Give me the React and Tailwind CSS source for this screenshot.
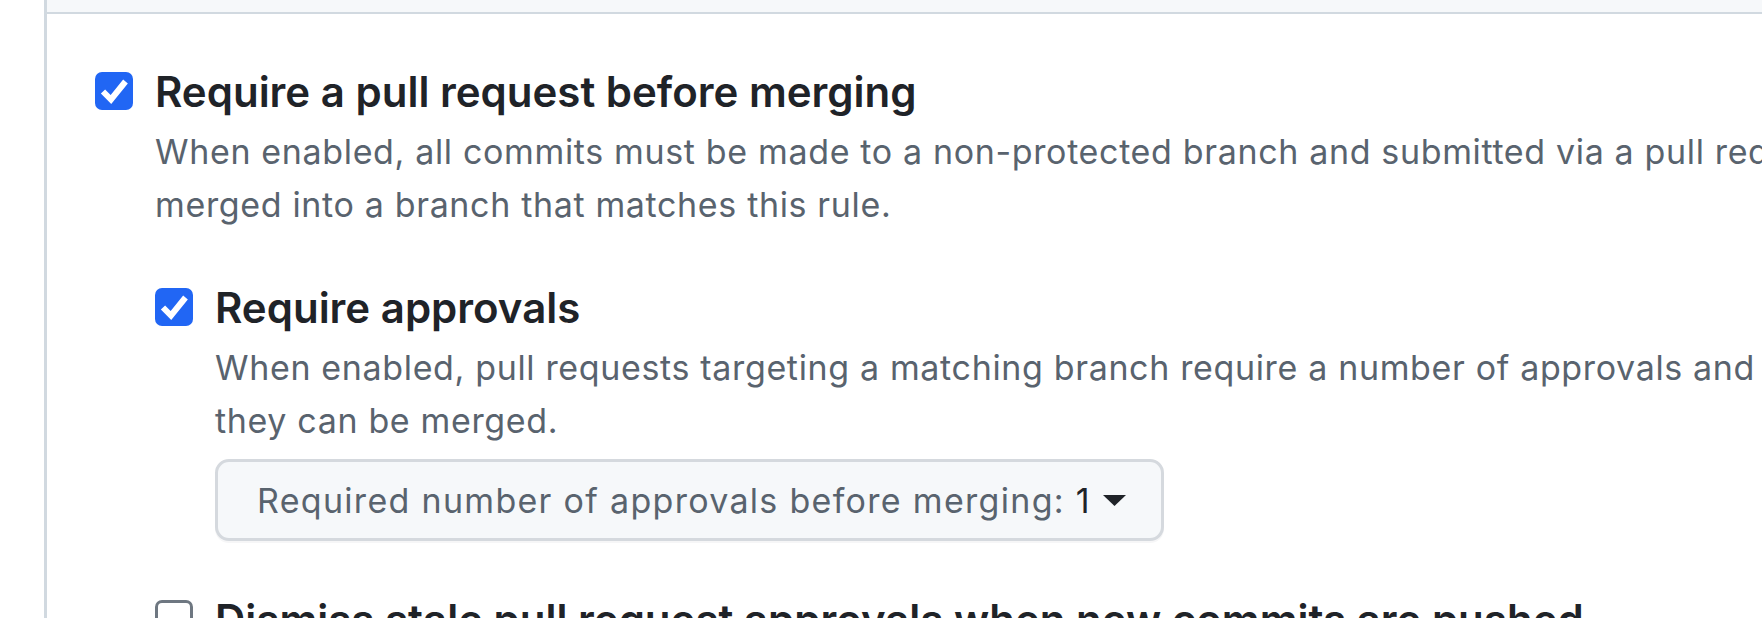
import { useState } from "react";

const rules = [
  {
    id: "pr",
    title: "Require a pull request before merging",
    lines: [
      "When enabled, all commits must be made to a non-protected branch and submitted via a pull request before they can be",
      "merged into a branch that matches this rule.",
    ],
    checked: true,
  },
];

function Checkbox({ checked, onChange }) {
  return (
    <button
      onClick={onChange}
      className={`mt-[6px] w-[38px] h-[38px] shrink-0 rounded-[7px] flex items-center justify-center ${
        checked ? "bg-[#2166f4]" : "bg-white border-[3px] border-[#6e7781]"
      }`}
    >
      {checked && (
        <svg width="38" height="38" viewBox="0 0 38 38">
          <polyline
            points="8,19.5 16,27.5 30.5,9.5"
            fill="none"
            stroke="white"
            strokeWidth="6"
          />
        </svg>
      )}
    </button>
  );
}

function Rule({ title, lines, checked, onToggle, children }) {
  return (
    <div className="flex gap-[22px]">
      <Checkbox checked={checked} onChange={onToggle} />
      <div className="min-w-0">
        <div className="text-[42px] leading-[52px] font-semibold text-[#1f2328] whitespace-nowrap">
          {title}
        </div>
        {lines && (
          <p className="mt-[7px] text-[34px] leading-[53px] tracking-[0.65px] text-[#59636e] whitespace-nowrap">
            {lines[0]}
            <br />
            {lines[1]}
          </p>
        )}
        {children}
      </div>
    </div>
  );
}

export default function App() {
  const [pr, setPr] = useState(true);
  const [approvals, setApprovals] = useState(true);
  const [dismiss, setDismiss] = useState(false);

  return (
    <div className="w-[1762px] h-[618px] overflow-hidden bg-white font-['Inter',sans-serif]">
      <div className="flex">
        <div className="w-[44px] shrink-0" />
        <div className="flex-1 border-l-[3px] border-[#d1d9e0]">
          {/* Header strip */}
          <div className="h-[14px] bg-[#f6f8fa] border-b-2 border-[#d1d9e0]" />

          {/* Rules */}
          <div className="pl-[48px] pt-[52px]">
            <Rule
              title={rules[0].title}
              lines={rules[0].lines}
              checked={pr}
              onToggle={() => setPr(!pr)}
            >
              <div className="mt-[51px] flex flex-col gap-[53px]">
                <Rule
                  title="Require approvals"
                  lines={[
                    "When enabled, pull requests targeting a matching branch require a number of approvals and no changes requested before",
                    "they can be merged.",
                  ]}
                  checked={approvals}
                  onToggle={() => setApprovals(!approvals)}
                >
                  <button className="mt-[12px] inline-flex items-center h-[82px] pl-[39px] pr-[35px] bg-[#f6f8fa] border-[3px] border-[#d5d9de] rounded-[14px] shadow-[0_2px_0_rgba(31,35,40,0.04)]">
                    <span className="text-[34px] leading-[53px] tracking-[1.3px] text-[#59636e] whitespace-nowrap">
                      Required number of approvals before merging:{" "}
                      <span className="text-[#1f2328] tracking-normal">1</span>
                    </span>
                    <svg className="ml-[13px]" width="23" height="11" viewBox="0 0 23 11">
                      <polygon points="0,0 23,0 11.5,11" fill="#1f2328" />
                    </svg>
                  </button>
                </Rule>
                <Rule
                  title="Dismiss stale pull request approvals when new commits are pushed"
                  checked={dismiss}
                  onToggle={() => setDismiss(!dismiss)}
                />
              </div>
            </Rule>
          </div>
        </div>
      </div>
    </div>
  );
}
